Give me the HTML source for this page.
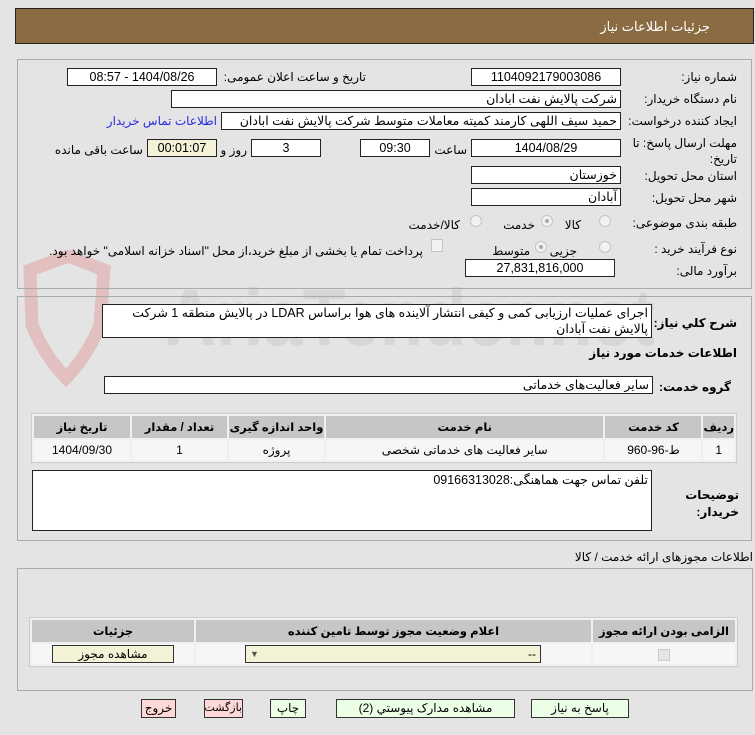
<!DOCTYPE html>
<html><head><meta charset="utf-8">
<style>
*{box-sizing:border-box;margin:0;padding:0}
body{width:755px;height:735px;background:#e4e4e4;font-family:"Liberation Sans","DejaVu Sans",sans-serif;font-size:12px;color:#000;position:relative;overflow:hidden}
.a{position:absolute}
.t{position:absolute;white-space:nowrap;direction:rtl;font-size:12px;line-height:14px}
.in{position:absolute;background:#fff;border:1px solid #222;height:18px;line-height:16px;padding:0 3px;white-space:nowrap;direction:rtl;font-size:12.5px;overflow:hidden}
.c{text-align:center}
.b{font-weight:bold}
.rad{position:absolute;width:12px;height:12px;border-radius:50%;border:1px solid #c4c4c4;background:#f2f2f2}
.rad.on::after{content:"";position:absolute;left:3px;top:3px;width:4px;height:4px;border-radius:50%;background:#aaa}
table{border-collapse:separate;border-spacing:2px;position:absolute;background:#f0f0f0;border:1px solid #ccc;direction:rtl}
th{background:#c6c6c6;font-weight:bold;height:22px;font-size:11.5px;padding:0}
td{background:#f6f6f6;height:20px;text-align:center;font-size:12px;padding:0}
.btn{position:absolute;height:19px;line-height:17px;border:1px solid #333;text-align:center;font-size:12px;direction:rtl;white-space:nowrap}
</style></head><body>
<div class="a" style="left:15px;top:8px;width:739px;height:36px;background:#8b6b42;border:1px solid #222"></div>
<div class="t" style="right:45px;top:20px;color:#fff;font-size:13px">جزئیات اطلاعات نیاز</div>

<svg class="a" style="left:0;top:250px" width="755" height="160">
<path d="M30 20 L68 6 L104 20 L100 75 Q88 105 66 128 Q44 105 32 75 Z" fill="none" stroke="#e2c0c0" stroke-width="13"/>
<text x="165" y="95" font-family="Liberation Sans" font-size="80" fill="#d6d6d6" font-weight="bold" textLength="490" lengthAdjust="spacingAndGlyphs">AriaTender.net</text>
</svg>

<div class="a" style="left:17px;top:59px;width:735px;height:230px;border:1px solid #aaa"></div>
<div class="a" style="left:17px;top:296px;width:735px;height:245px;border:1px solid #aaa"></div>

<div class="t" style="right:18px;top:70px">شماره نیاز:</div>
<div class="in c" style="left:471px;top:68px;width:150px">1104092179003086</div>
<div class="t" style="right:389px;top:70px">تاریخ و ساعت اعلان عمومی:</div>
<div class="in c" style="left:67px;top:68px;width:150px">1404/08/26 - 08:57</div>

<div class="t" style="right:18px;top:92px">نام دستگاه خریدار:</div>
<div class="in" style="left:171px;top:90px;width:450px">شرکت پالایش نفت ابادان</div>

<div class="t" style="right:18px;top:114px">ایجاد کننده درخواست:</div>
<div class="in" style="left:221px;top:112px;width:400px">حمید سیف اللهی کارمند کمیته معاملات متوسط  شرکت پالایش نفت ابادان</div>
<div class="t" style="right:538px;top:114px;color:#2a2ae0">اطلاعات تماس خریدار</div>

<div class="t" style="right:18px;top:135px;line-height:16px">مهلت ارسال پاسخ: تا<br>تاریخ:</div>
<div class="in c" style="left:471px;top:139px;width:150px">1404/08/29</div>
<div class="t" style="right:288px;top:143px">ساعت</div>
<div class="in c" style="left:360px;top:139px;width:70px">09:30</div>
<div class="in c" style="left:251px;top:139px;width:70px">3</div>
<div class="t" style="right:508px;top:143px">روز و</div>
<div class="in c" style="left:147px;top:139px;width:70px;background:#f3f1d6">00:01:07</div>
<div class="t" style="right:612px;top:143px">ساعت باقی مانده</div>

<div class="t" style="right:18px;top:169px">استان محل تحویل:</div>
<div class="in" style="left:471px;top:166px;width:150px">خوزستان</div>
<div class="t" style="right:18px;top:191px">شهر محل تحویل:</div>
<div class="in" style="left:471px;top:188px;width:150px">آبادان</div>

<div class="t" style="right:18px;top:216px">طبقه بندی موضوعی:</div>
<div class="rad" style="left:599px;top:215px"></div><div class="t" style="right:174px;top:218px">کالا</div>
<div class="rad on" style="left:541px;top:215px"></div><div class="t" style="right:220px;top:218px">خدمت</div>
<div class="rad" style="left:470px;top:215px"></div><div class="t" style="right:295px;top:218px">کالا/خدمت</div>

<div class="t" style="right:18px;top:242px">نوع فرآیند خرید :</div>
<div class="rad" style="left:599px;top:241px"></div><div class="t" style="right:178px;top:244px">جزیی</div>
<div class="rad on" style="left:535px;top:241px"></div><div class="t" style="right:225px;top:244px">متوسط</div>
<div class="a" style="left:431px;top:239px;width:12px;height:13px;border:1px solid #c4c4c4;background:#f2f2f2"></div>
<div class="t" style="right:332px;top:244px">پرداخت تمام یا بخشی از مبلغ خرید،از محل "اسناد خزانه اسلامی" خواهد بود.</div>

<div class="t" style="right:18px;top:264px">برآورد مالی:</div>
<div class="in c" style="left:465px;top:259px;width:150px">27,831,816,000</div>

<div class="t b" style="right:18px;top:316px">شرح کلي نیاز:</div>
<div class="in" style="left:102px;top:304px;width:550px;height:34px;line-height:16px;white-space:normal;padding-top:0">اجرای عملیات ارزیابی کمی و کیفی انتشار آلاینده های هوا براساس LDAR  در پالایش منطقه 1 شرکت پالایش نفت آبادان</div>
<div class="t b" style="right:18px;top:346px">اطلاعات خدمات مورد نیاز</div>
<div class="t b" style="right:24px;top:380px">گروه خدمت:</div>
<div class="in" style="left:104px;top:376px;width:549px">سایر فعالیت‌های خدماتی</div>

<table style="left:31px;top:413px;width:706px">
<tr><th style="width:25px">ردیف</th><th style="width:96px">کد خدمت</th><th>نام خدمت</th><th style="width:95px">واحد اندازه گیری</th><th style="width:95px">تعداد / مقدار</th><th style="width:96px">تاریخ نیاز</th></tr>
<tr><td>1</td><td>ط-96-960</td><td>سایر فعالیت های خدماتی شخصی</td><td>پروژه</td><td>1</td><td>1404/09/30</td></tr>
</table>

<div class="in" style="left:32px;top:470px;width:620px;height:61px;line-height:18px">تلفن تماس جهت هماهنگی:09166313028</div>
<div class="t b" style="right:16px;top:487px;line-height:17px">توضیحات<br>خریدار:</div>

<div class="t" style="right:2px;top:550px">اطلاعات مجوزهای ارائه خدمت / کالا</div>
<div class="a" style="left:17px;top:568px;width:736px;height:123px;border:1px solid #aaa"></div>
<table style="left:29px;top:617px;width:709px">
<tr><th style="width:142px">الزامی بودن ارائه مجوز</th><th>اعلام وضعیت مجوز توسط تامین کننده</th><th style="width:162px">جزئیات</th></tr>
<tr><td><span style="display:inline-block;width:12px;height:12px;border:1px solid #ccc;background:#e4e4e4;vertical-align:middle"></span></td><td><div style="margin:0 50px 0 49px;height:18px;border:1px solid #333;background:#f3f1d6;text-align:right;padding:0 4px;line-height:16px;direction:ltr"><span style="float:left;font-size:9px;color:#555">&#9660;</span>--</div></td><td><div style="margin:0 20px 0 20px;height:18px;border:1px solid #333;background:#f3f1d6;line-height:16px">مشاهده مجوز</div></td></tr>
</table>

<div class="btn" style="left:531px;top:699px;width:98px;background:#eaffe6">پاسخ به نیاز</div>
<div class="btn" style="left:336px;top:699px;width:179px;background:#eaffe6">مشاهده مدارک پیوستي (2)</div>
<div class="btn" style="left:270px;top:699px;width:36px;background:#eaffe6">چاپ</div>
<div class="btn" style="left:204px;top:699px;width:39px;background:#ffd8d8;font-size:11px">بازگشت</div>
<div class="btn" style="left:141px;top:699px;width:35px;background:#ffd8d8">خروج</div>
</body></html>
